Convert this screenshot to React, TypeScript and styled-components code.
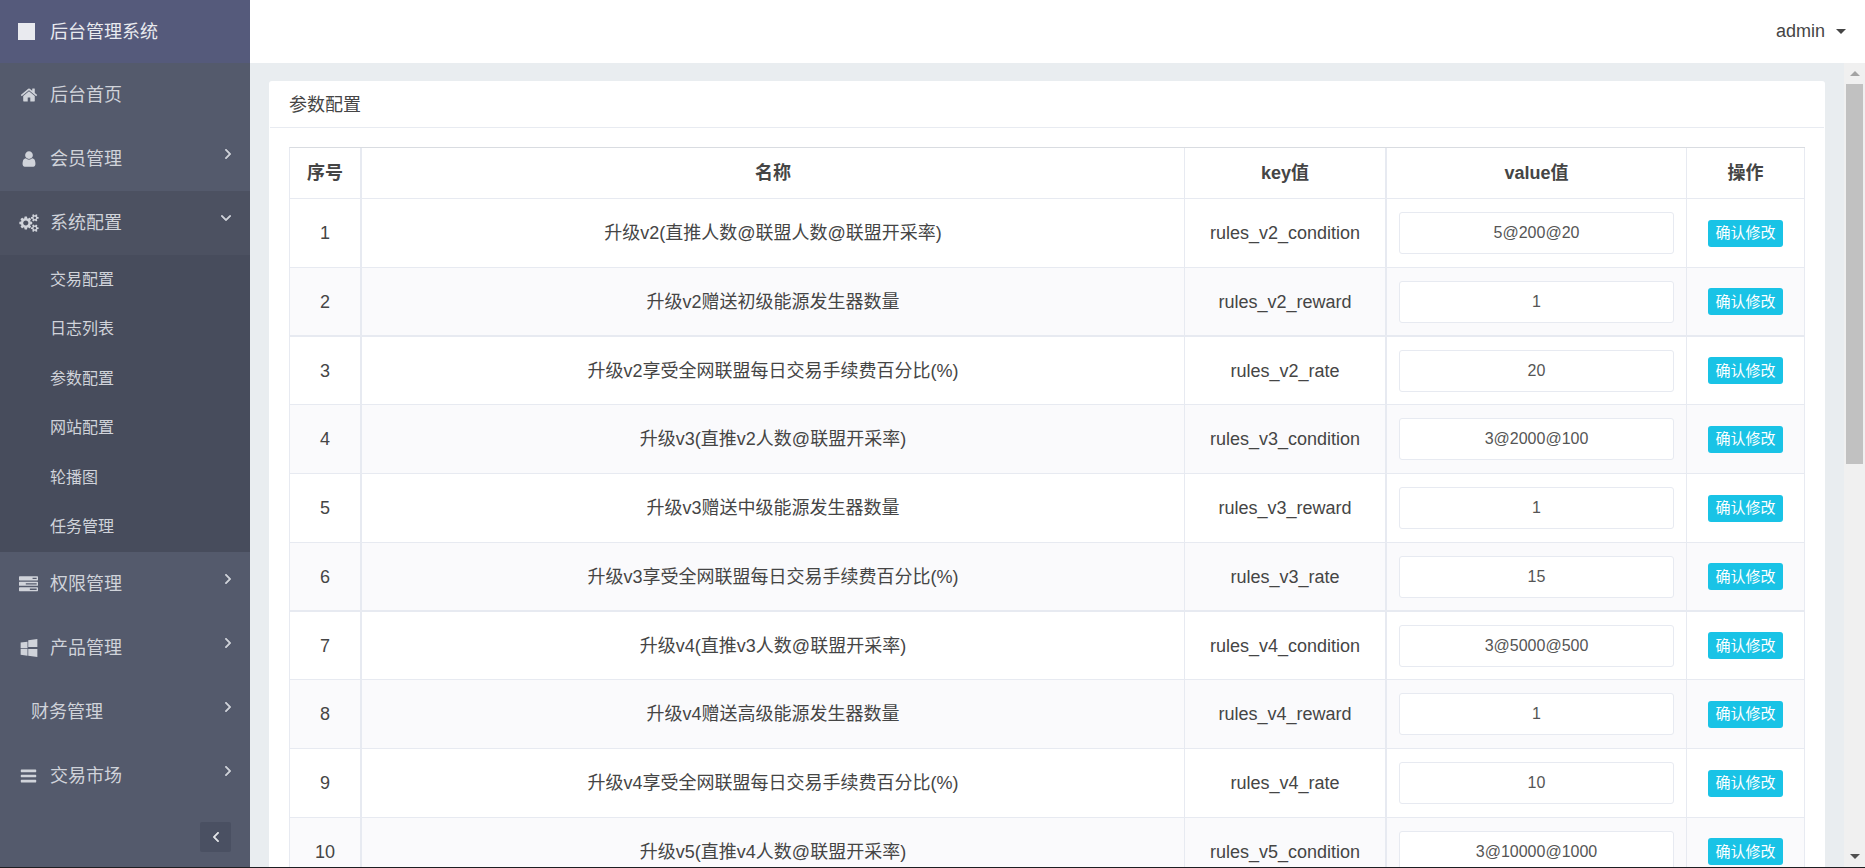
import React, { useState } from "react";
import styled, { createGlobalStyle, css } from "styled-components";

const GlobalStyle = createGlobalStyle`
  *, *::before, *::after { box-sizing: border-box; }
  body {
    margin: 0;
    background: #e9edf0;
    color: #454545;
    font-family: "Liberation Sans", "Noto Sans CJK SC", sans-serif;
    font-size: 18px;
    line-height: 24px;
  }
  button, input { font-family: inherit; }
`;

/* ---------- icons ---------- */

type IconName = "home" | "user" | "cogs" | "tasks" | "windows" | "bars";

const COG_SMALL =
  "v140q0 16-149 31-12 27-30 52 51 113 51 138 0 4-4 7-122 71-124 71-8 0-46-47t-52-68q-20 2-30 2t-30-2q-14 21-52 68t-46 47q-2 0-124-71-4-3-4-7 0-25 51-138-18-25-30-52-149-15-149-31v-140q0-16 149-31 13-29 30-52-51-113-51-138 0-4 4-7 4-2 35-20t59-34 30-16q8 0 46 46.500t52 67.500q20-2 30-2t30 2q51-71 92-112l6-2q4 0 124 70 4 3 4 7 0 25-51 138 17 23 30 52 149 15 149 31z";

const ICONS: Record<IconName, { box: string; width: number; height: number; d: string }> = {
  home: {
    box: "0 0 1792 1792",
    width: 18,
    height: 18,
    d: "M1472 992v480q0 26-19 45t-45 19h-384v-384h-256v384h-384q-26 0-45-19t-19-45v-480q0-1 .5-3t.5-3l575-474 575 474q1 2 1 6zm223-69l-62 74q-8 9-21 11h-3q-13 0-21-7l-692-577-692 577q-12 8-24 7-13-2-21-11l-62-74q-8-10-7-23.500t11-21.500l719-599q32-26 76-26t76 26l244 204v-195q0-14 9-23t23-9h192q14 0 23 9t9 23v408l219 182q10 8 11 21.500t-7 23.500z",
  },
  user: {
    box: "0 0 1792 1792",
    width: 18,
    height: 18,
    d: "M1536 1399q0 109-62.500 187t-150.500 78h-854q-88 0-150.500-78t-62.500-187q0-85 8.500-160.500t31.500-152 58.500-131 94-89 134.500-34.500q131 128 313 128t313-128q76 0 134.500 34.500t94 89 58.500 131 31.500 152 8.500 160.500zm-256-887q0 159-112.500 271.500t-271.500 112.500-271.500-112.500-112.500-271.500 112.500-271.500 271.500-112.500 271.500 112.500 112.500 271.500z",
  },
  cogs: {
    box: "0 0 1920 1792",
    width: 20,
    height: 18,
    d:
      "M896 896q0-106-75-181t-181-75-181 75-75 181 75 181 181 75 181-75 75-181zm768 512q0-52-38-90t-90-38-90 38-38 90q0 53 37.500 90.500t90.500 37.500 90.500-37.500 37.500-90.500zm0-1024q0-52-38-90t-90-38-90 38-38 90q0 53 37.500 90.500t90.500 37.500 90.500-37.500 37.500-90.500zm-384 421v185q0 10-7 19.500t-16 10.500l-155 24q-11 35-32 76 34 48 90 115 7 11 7 20 0 12-7 19-23 30-82.500 89.500t-78.500 59.500q-11 0-21-7l-115-90q-37 19-77 31-11 108-23 155-7 24-30 24h-186q-11 0-20-7.500t-10-17.500l-23-153q-34-10-75-31l-118 89q-7 7-20 7-11 0-21-8-144-133-144-160 0-9 7-19 10-14 41-53t47-61q-23-44-35-82l-152-24q-10-1-17-9.500t-7-19.500v-185q0-10 7-19.500t16-10.500l155-24q11-35 32-76-34-48-90-115-7-11-7-20 0-12 7-20 22-30 82-89t79-59q11 0 21 7l115 90q34-18 77-32 11-108 23-154 7-24 30-24h186q11 0 20 7.500t10 17.500l23 153q34 10 75 31l118-89q8-7 20-7 11 0 21 8 144 133 144 160 0 8-7 19-12 16-42 54t-45 60q23 48 34 82l152 23q10 2 17 10.500t7 19.500z" +
      "M1920 1338" + COG_SMALL + "M1920 314" + COG_SMALL,
  },
  tasks: {
    box: "0 0 1792 1792",
    width: 19,
    height: 19,
    d: "M1024 1408h640v-128h-640v128zm-384-512h1024v-128h-1024v128zm640-512h384v-128h-384v128zm512 832v256q0 26-19 45t-45 19h-1664q-26 0-45-19t-19-45v-256q0-26 19-45t45-19h1664q26 0 45 19t19 45zm0-512v256q0 26-19 45t-45 19h-1664q-26 0-45-19t-19-45v-256q0-26 19-45t45-19h1664q26 0 45 19t19 45zm0-512v256q0 26-19 45t-45 19h-1664q-26 0-45-19t-19-45v-256q0-26 19-45t45-19h1664q26 0 45 19t19 45z",
  },
  windows: {
    box: "0 0 1792 1792",
    width: 18,
    height: 18,
    d: "M746 1006v651l-682-94v-557h682zm0-743v659h-682v-565zm982 743v786l-907-125v-661h907zm0-1006v794h-907v-669z",
  },
  bars: {
    box: "0 0 1792 1792",
    width: 19,
    height: 18,
    d: "M1664 1344v128q0 26-19 45t-45 19h-1408q-26 0-45-19t-19-45v-128q0-26 19-45t45-19h1408q26 0 45 19t19 45zm0-512v128q0 26-19 45t-45 19h-1408q-26 0-45-19t-19-45v-128q0-26 19-45t45-19h1408q26 0 45 19t19 45zm0-512v128q0 26-19 45t-45 19h-1408q-26 0-45-19t-19-45v-128q0-26 19-45t45-19h1408q26 0 45 19t19 45z",
  },
};

const ANGLE_RIGHT =
  "M1171 960q0 13-10 23l-466 466q-10 10-23 10t-23-10l-50-50q-10-10-10-23t10-23l393-393-393-393q-10-10-10-23t10-23l50-50q10-10 23-10t23 10l466 466q10 10 10 23z";
const ANGLE_DOWN =
  "M1395 736q0 13-10 23l-466 466q-10 10-23 10t-23-10l-466-466q-10-10-10-23t10-23l50-50q10-10 23-10t23 10l393 393 393-393q10-10 23-10t23 10l50 50q10 10 10 23z";
const ANGLE_LEFT =
  "M621 960q0 13 10 23l466 466q10 10 23 10t23-10l50-50q10-10 10-23t-10-23l-393-393 393-393q10-10 10-23t-10-23l-50-50q-10-10-23-10t-23 10l-466 466q-10 10-10 23z";

const Glyph = styled.svg`
  display: block;
  flex: none;
  fill: currentColor;
`;

const AngleGlyph = styled(Glyph)`
  stroke: currentColor;
  stroke-width: 60;
`;

function Icon({ name }: { name: IconName }) {
  const icon = ICONS[name];
  return (
    <Glyph viewBox={icon.box} width={icon.width} height={icon.height} aria-hidden="true">
      <path d={icon.d} />
    </Glyph>
  );
}

function Angle({ direction }: { direction: "left" | "right" | "down" }) {
  if (direction === "down") {
    return (
      <AngleGlyph viewBox="397 653 998 582" width={10} height={6} aria-hidden="true">
        <path d={ANGLE_DOWN} />
      </AngleGlyph>
    );
  }
  const left = direction === "left";
  return (
    <AngleGlyph viewBox={left ? "621 461 582 998" : "589 461 582 998"} width={6} height={10} aria-hidden="true">
      <path d={left ? ANGLE_LEFT : ANGLE_RIGHT} />
    </AngleGlyph>
  );
}

/* ---------- shell ---------- */

const Shell = styled.div`
  display: flex;
  height: 100vh;
  overflow: hidden;
  border-bottom: 1px solid #1d1e22;
`;

const Sidebar = styled.aside`
  display: flex;
  flex: none;
  flex-direction: column;
  width: 250px;
  background: #545a6c;
  color: #d0d3da;
`;

const Brand = styled.a`
  display: flex;
  flex: none;
  align-items: center;
  gap: 15px;
  height: 63px;
  padding: 0 18px;
  background: #555a7b;
  color: #e9eaef;
  text-decoration: none;
`;

const BrandMark = styled.span`
  width: 17px;
  height: 17px;
  background: #e9eaef;
`;

const Menu = styled.ul`
  margin: 0;
  padding: 0;
  list-style: none;
`;

const MenuLink = styled.a<{ $open?: boolean }>`
  display: flex;
  align-items: center;
  gap: 12px;
  height: 64px;
  padding: 0 19px;
  background: ${(p) => (p.$open ? "#4c5161" : "transparent")};
  color: inherit;
  text-decoration: none;
`;

const IconSlot = styled.span<{ $empty?: boolean }>`
  display: flex;
  flex: none;
  justify-content: center;
  width: ${(p) => (p.$empty ? 0 : 19)}px;
`;

const MenuLabel = styled.span`
  flex: 1;
`;

const ArrowSlot = styled.span`
  padding-bottom: 10px;
`;

const SubMenu = styled(Menu)`
  display: flex;
  flex-direction: column;
  min-height: 297px;
  background: #474c5c;
`;

const SubItem = styled.li`
  display: flex;
  flex: 1;
`;

const SubLink = styled.a`
  display: flex;
  flex: 1;
  align-items: center;
  padding-left: 50px;
  color: inherit;
  font-size: 16px;
  text-decoration: none;
`;

const SidebarFooter = styled.div`
  display: flex;
  justify-content: flex-end;
  padding: 14px 19px;
`;

const CollapseButton = styled.button`
  display: flex;
  align-items: center;
  justify-content: center;
  width: 31px;
  height: 30px;
  padding: 0;
  border: 0;
  border-radius: 2px;
  background: #4a5062;
  color: #e4e6ea;
`;

const Page = styled.div`
  display: flex;
  flex: 1;
  flex-direction: column;
  min-width: 0;
`;

const TopBar = styled.header`
  display: flex;
  flex: none;
  align-items: center;
  justify-content: flex-end;
  height: 63px;
  padding: 0 19px;
  background: #fff;
`;

const UserButton = styled.button`
  display: flex;
  align-items: center;
  gap: 11px;
  padding: 0;
  border: 0;
  background: none;
  color: #454545;
  font-size: 18px;
`;

const Caret = styled.span`
  border: 5px solid transparent;
  border-top-color: currentColor;
  border-bottom: 0;
`;

const Body = styled.div`
  display: flex;
  flex: 1;
  min-height: 0;
`;

const Content = styled.main`
  flex: 1;
  min-width: 0;
  overflow: hidden;
  padding: 18px 19px;
`;

const ScrollTrack = styled.div`
  display: flex;
  flex: none;
  flex-direction: column;
  justify-content: space-between;
  width: 21px;
  background: #f0f0f0;
`;

const ScrollThumb = styled.div`
  flex: 0 0 380px;
  margin: 0 2px auto;
  background: #c1c1c1;
`;

const ScrollArrow = styled.button<{ $down?: boolean }>`
  display: flex;
  flex: none;
  align-items: center;
  justify-content: center;
  height: 21px;
  padding: 0;
  border: 0;
  background: none;

  &::before {
    content: "";
    border: 5px solid transparent;
    ${(p) =>
      p.$down
        ? css`
            border-top-color: #505050;
            border-bottom: 0;
          `
        : css`
            border-bottom-color: #a3a3a3;
            border-top: 0;
          `}
  }
`;

/* ---------- panel and table ---------- */

const Panel = styled.section`
  border-radius: 3px;
  background: #fff;
`;

const PanelTitle = styled.h1`
  height: 47px;
  margin: 0 1px;
  padding: 0 19px;
  border-bottom: 1px solid #e8ebf1;
  font-size: 18px;
  font-weight: 400;
  line-height: 48px;
`;

const PanelBody = styled.div`
  padding: 19px 20px;
`;

const Table = styled.table`
  width: 100%;
  table-layout: fixed;
  border: 1px solid #e7eaf1;
  border-width: 1px 0 0 1px;
  border-top-color: #d9dce1;
  border-collapse: separate;
  border-spacing: 0;
  text-align: center;
`;

const Col = styled.col<{ $width?: number }>`
  width: ${(p) => (p.$width ? `${p.$width}px` : "auto")};
`;

const cell = css<{ $ruled?: boolean }>`
  padding: 0 12px;
  border: 0 solid #e7eaf1;
  border-right-width: ${(p) => (p.$ruled ? 2 : 1)}px;
  border-bottom-width: 1px;
`;

const HeadCell = styled.th<{ $ruled?: boolean }>`
  ${cell}
  height: 51px;
  font-weight: 700;
`;

const Cell = styled.td<{ $ruled?: boolean }>`
  ${cell}
  height: 69px;
`;

const Row = styled.tr`
  &:nth-child(even) {
    background: #fafafc;
  }
  &:nth-child(4n + 2) ${Cell} {
    border-bottom-width: 2px;
  }
  &:nth-child(4n + 3) ${Cell} {
    height: 68px;
  }
`;

const ValueInput = styled.input`
  display: block;
  width: 100%;
  height: 42px;
  border: 1px solid #e7eaf1;
  border-radius: 3px;
  background: #fff;
  color: #555;
  font-size: 16px;
  text-align: center;
`;

const SaveButton = styled.button`
  display: block;
  width: 75px;
  height: 27px;
  margin: 0 auto;
  padding: 0;
  border: 0;
  border-radius: 3px;
  background: #19c3e6;
  color: #fff;
  font-size: 15px;
  line-height: 26px;
`;

/* ---------- data ---------- */

interface MenuEntry {
  label: string;
  icon?: IconName;
  arrow?: boolean;
  children?: string[];
}

const MENU: MenuEntry[] = [
  { label: "后台首页", icon: "home" },
  { label: "会员管理", icon: "user", arrow: true },
  {
    label: "系统配置",
    icon: "cogs",
    arrow: true,
    children: ["交易配置", "日志列表", "参数配置", "网站配置", "轮播图", "任务管理"],
  },
  { label: "权限管理", icon: "tasks", arrow: true },
  { label: "产品管理", icon: "windows", arrow: true },
  { label: "财务管理", arrow: true },
  { label: "交易市场", icon: "bars", arrow: true },
];

const RULES = [
  { name: "升级v2(直推人数@联盟人数@联盟开采率)", key: "rules_v2_condition", value: "5@200@20" },
  { name: "升级v2赠送初级能源发生器数量", key: "rules_v2_reward", value: "1" },
  { name: "升级v2享受全网联盟每日交易手续费百分比(%)", key: "rules_v2_rate", value: "20" },
  { name: "升级v3(直推v2人数@联盟开采率)", key: "rules_v3_condition", value: "3@2000@100" },
  { name: "升级v3赠送中级能源发生器数量", key: "rules_v3_reward", value: "1" },
  { name: "升级v3享受全网联盟每日交易手续费百分比(%)", key: "rules_v3_rate", value: "15" },
  { name: "升级v4(直推v3人数@联盟开采率)", key: "rules_v4_condition", value: "3@5000@500" },
  { name: "升级v4赠送高级能源发生器数量", key: "rules_v4_reward", value: "1" },
  { name: "升级v4享受全网联盟每日交易手续费百分比(%)", key: "rules_v4_rate", value: "10" },
  { name: "升级v5(直推v4人数@联盟开采率)", key: "rules_v5_condition", value: "3@10000@1000" },
];

function RuleRow({ index, rule }: { index: number; rule: (typeof RULES)[number] }) {
  const [value, setValue] = useState(rule.value);
  return (
    <Row>
      <Cell $ruled>{index}</Cell>
      <Cell>{rule.name}</Cell>
      <Cell $ruled>{rule.key}</Cell>
      <Cell>
        <ValueInput aria-label={rule.name} value={value} onChange={(e) => setValue(e.target.value)} />
      </Cell>
      <Cell>
        <SaveButton type="button">确认修改</SaveButton>
      </Cell>
    </Row>
  );
}

export default function App() {
  return (
    <>
      <GlobalStyle />
      <Shell>
        <Sidebar>
          <Brand href="#">
            <BrandMark />
            后台管理系统
          </Brand>
          <nav>
            <Menu>
              {MENU.map((entry) => (
                <li key={entry.label}>
                  <MenuLink href="#" $open={!!entry.children}>
                    <IconSlot $empty={!entry.icon}>{entry.icon && <Icon name={entry.icon} />}</IconSlot>
                    <MenuLabel>{entry.label}</MenuLabel>
                    {entry.arrow && (
                      <ArrowSlot>
                        <Angle direction={entry.children ? "down" : "right"} />
                      </ArrowSlot>
                    )}
                  </MenuLink>
                  {entry.children && (
                    <SubMenu>
                      {entry.children.map((child) => (
                        <SubItem key={child}>
                          <SubLink href="#">{child}</SubLink>
                        </SubItem>
                      ))}
                    </SubMenu>
                  )}
                </li>
              ))}
            </Menu>
          </nav>
          <SidebarFooter>
            <CollapseButton type="button" aria-label="收起菜单">
              <Angle direction="left" />
            </CollapseButton>
          </SidebarFooter>
        </Sidebar>
        <Page>
          <TopBar>
            <UserButton type="button">
              admin
              <Caret />
            </UserButton>
          </TopBar>
          <Body>
            <Content>
              <Panel>
                <PanelTitle>参数配置</PanelTitle>
                <PanelBody>
                  <Table>
                    <colgroup>
                      <Col $width={72} />
                      <Col />
                      <Col $width={202} />
                      <Col $width={300} />
                      <Col $width={118} />
                    </colgroup>
                    <thead>
                      <tr>
                        <HeadCell $ruled>序号</HeadCell>
                        <HeadCell>名称</HeadCell>
                        <HeadCell $ruled>key值</HeadCell>
                        <HeadCell>value值</HeadCell>
                        <HeadCell>操作</HeadCell>
                      </tr>
                    </thead>
                    <tbody>
                      {RULES.map((rule, i) => (
                        <RuleRow key={rule.key} index={i + 1} rule={rule} />
                      ))}
                    </tbody>
                  </Table>
                </PanelBody>
              </Panel>
            </Content>
            <ScrollTrack>
              <ScrollArrow type="button" aria-label="向上滚动" />
              <ScrollThumb />
              <ScrollArrow type="button" aria-label="向下滚动" $down />
            </ScrollTrack>
          </Body>
        </Page>
      </Shell>
    </>
  );
}
